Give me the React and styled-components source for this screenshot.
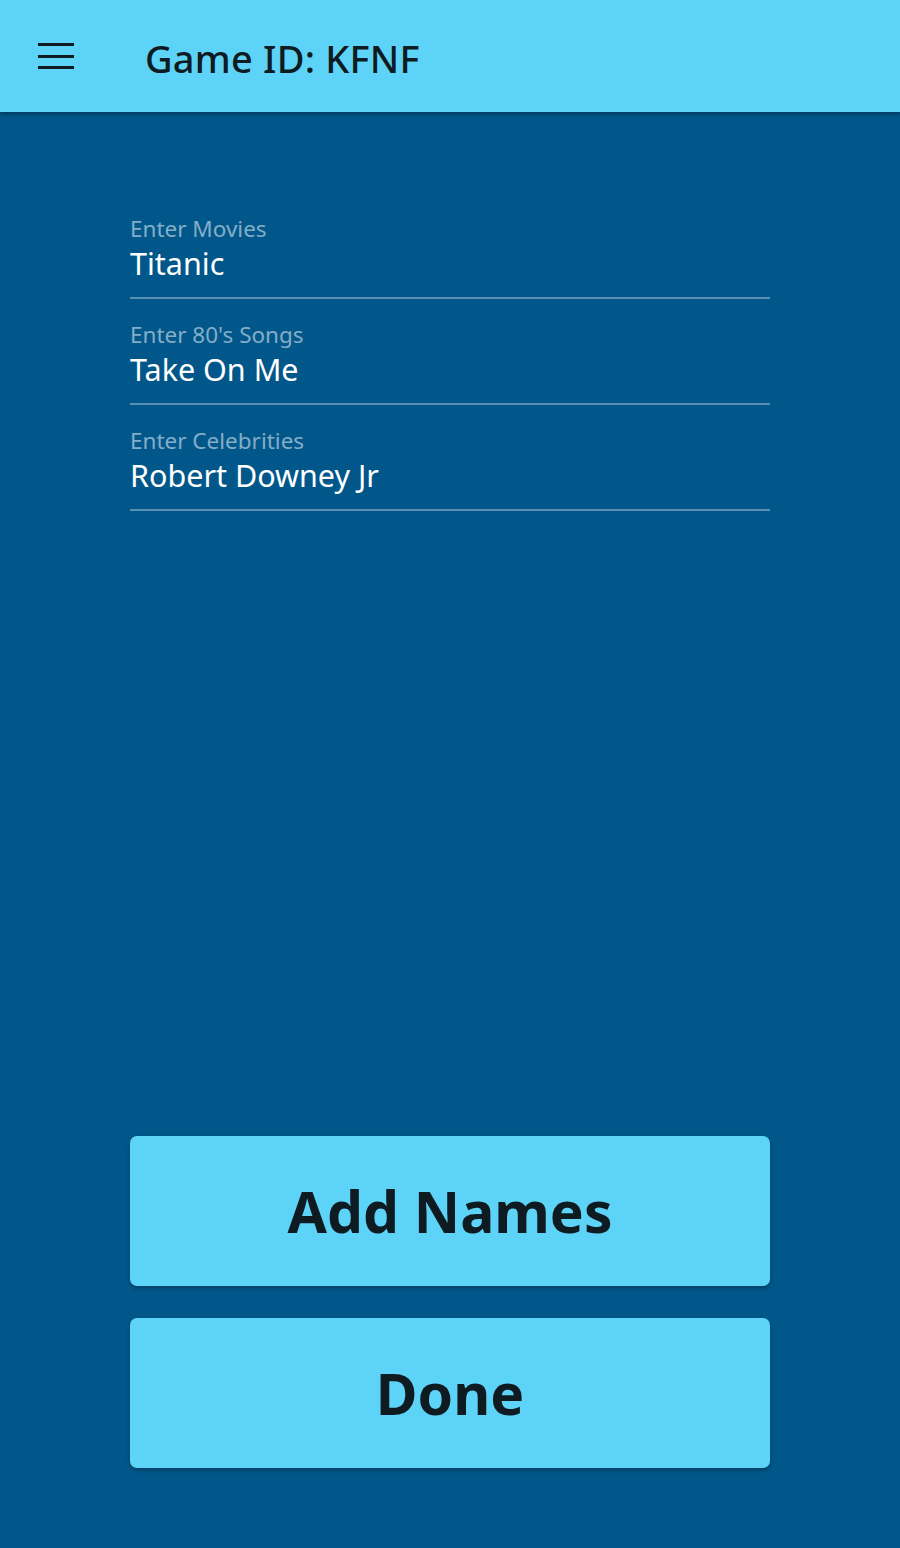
import React from "react";
import styled, { createGlobalStyle } from "styled-components";

const GlobalStyle = createGlobalStyle`
  html, body {
    margin: 0;
    padding: 0;
    background: #02578a;
    font-family: "Noto Sans", "Open Sans", sans-serif;
  }
`;

const Page = styled.div`
  display: flex;
  flex-direction: column;
  height: 1548px;
  background: #02578a;
`;

const Header = styled.header`
  display: flex;
  align-items: center;
  height: 112px;
  background: #5ed3f8;
  box-shadow: 0 2px 4px rgba(0, 0, 0, 0.35);
  position: relative;
  z-index: 1;
`;

const MenuButton = styled.div`
  width: 36px;
  height: 26px;
  margin-left: 38px;
  display: flex;
  flex-direction: column;
  justify-content: space-between;

  span {
    display: block;
    height: 3px;
    background: #0e1c22;
  }
`;

const Title = styled.h1`
  margin: 4px 0 0 71px;
  font-size: 38px;
  font-weight: 500;
  color: #0e1c22;
  letter-spacing: 0.2px;
`;

const Content = styled.main`
  flex: 1;
  display: flex;
  flex-direction: column;
  padding: 0 130px;
`;

const Fields = styled.div`
  display: flex;
  flex-direction: column;
  padding-top: 81px;
`;

const Field = styled.div`
  height: 106px;
  display: flex;
  flex-direction: column;
  justify-content: flex-end;
  border-bottom: 2px solid #5b90b4;
  box-sizing: border-box;
  padding-bottom: 14px;
`;

const Label = styled.div`
  font-size: 22.5px;
  color: #83adc8;
  line-height: 28px;
`;

const Value = styled.div`
  font-size: 30.5px;
  color: #ffffff;
  line-height: 40px;
`;

const Actions = styled.div`
  margin-top: auto;
  padding-bottom: 80px;
  display: flex;
  flex-direction: column;
  gap: 32px;
`;

const Button = styled.button`
  height: 150px;
  border: none;
  border-radius: 7px;
  background: #5ed3f8;
  color: #0e1c22;
  font-family: inherit;
  font-size: 57px;
  font-weight: 700;
  box-shadow: 0 2px 4px rgba(0, 0, 0, 0.3);
  cursor: pointer;
`;

const fields = [
  { label: "Enter Movies", value: "Titanic" },
  { label: "Enter 80's Songs", value: "Take On Me" },
  { label: "Enter Celebrities", value: "Robert Downey Jr" },
];

export default function App() {
  return (
    <>
      <GlobalStyle />
      <Page>
        <Header>
          <MenuButton>
            <span />
            <span />
            <span />
          </MenuButton>
          <Title>Game ID: KFNF</Title>
        </Header>
        <Content>
          <Fields>
            {fields.map((f) => (
              <Field key={f.label}>
                <Label>{f.label}</Label>
                <Value>{f.value}</Value>
              </Field>
            ))}
          </Fields>
          <Actions>
            <Button>Add Names</Button>
            <Button>Done</Button>
          </Actions>
        </Content>
      </Page>
    </>
  );
}
